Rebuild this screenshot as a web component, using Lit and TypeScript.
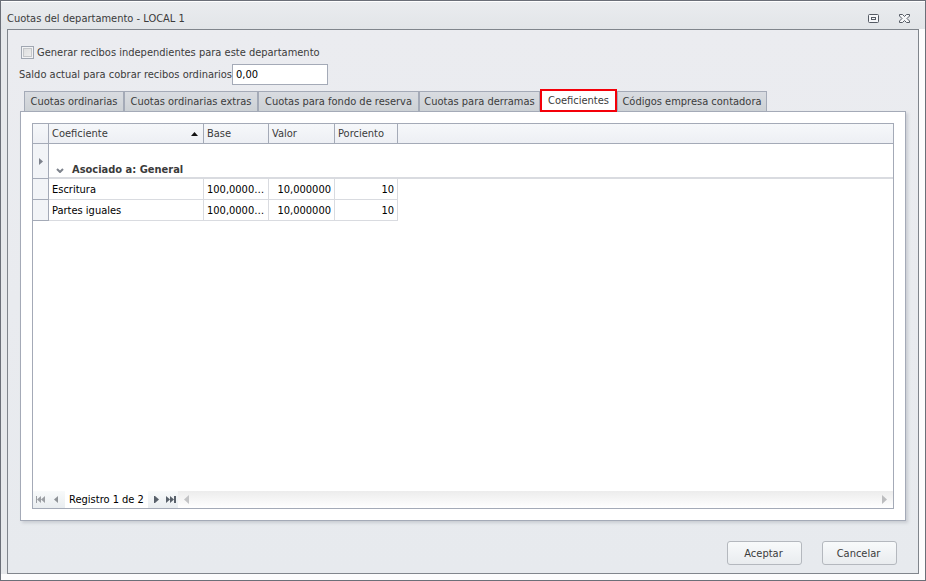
import { LitElement, html, css, svg } from "lit";
import { customElement, state } from "lit/decorators.js";
import { classMap } from "lit/directives/class-map.js";

const TABS = [
  "Cuotas ordinarias",
  "Cuotas ordinarias extras",
  "Cuotas para fondo de reserva",
  "Cuotas para derramas",
  "Coeficientes",
  "Códigos empresa contadora",
];

const ROWS = [
  { name: "Escritura", base: "100,000000", value: "10,000000", percent: "10" },
  { name: "Partes iguales", base: "100,000000", value: "10,000000", percent: "10" },
];

const icon = (w: number, h: number, body: unknown) => html`<svg
  width=${w} height=${h} viewBox="0 0 ${w} ${h}" aria-hidden="true">${body}</svg>`;

const maximizeIcon = icon(11, 9, svg`
  <rect x="0.5" y="0.5" width="10" height="8" rx="1" fill="#f6f7f9" stroke="#555b64"/>
  <rect x="3.5" y="3.5" width="4" height="2" fill="none" stroke="#555b64"/>`);
const closeIcon = icon(11, 9, svg`
  <path d="M0.5 0.5H3.5L5.5 2.5L7.5 0.5H10.5V2L8 4.5L10.5 7V8.5H7.5L5.5 6.5L3.5 8.5H0.5V7L3 4.5L0.5 2Z"
    fill="#f6f7f9" stroke="#555b64"/>`);
const sortIcon = icon(7, 4, svg`<path d="M0 4L3.5 0L7 4Z" fill="#111"/>`);
const rowIcon = icon(4, 7, svg`<path d="M0 0L4 3.5L0 7Z" fill="#7d828c"/>`);
const chevronIcon = icon(8, 5, svg`<path d="M1 1L4 4L7 1" fill="none" stroke="#7d828c" stroke-width="2"/>`);
const firstIcon = icon(10, 7, svg`<path d="M0 0H1V7H0Z M5 0V7L1 3.5Z M9 0V7L5 3.5Z" fill="#9c9fa4"/>`);
const prevIcon = icon(4, 7, svg`<path d="M4 0L0 3.5L4 7Z" fill="#8f9398"/>`);
const nextIcon = icon(5, 7, svg`<path d="M0 0H1L5 3.5L1 7H0Z" fill="#59616b"/>`);
const lastIcon = icon(10, 7, svg`<path d="M0 0L4 3.5L0 7Z M4 0L8 3.5L4 7Z M8 0H10V7H8Z" fill="#59616b"/>`);
const scrollLeftIcon = icon(5, 9, svg`<path d="M5 0L0 4.5L5 9Z" fill="#c3c4c6"/>`);
const scrollRightIcon = icon(5, 9, svg`<path d="M0 0L5 4.5L0 9Z" fill="#bcbdbf"/>`);

@customElement("app-root")
export class AppRoot extends LitElement {
  @state() private active = 4;

  static styles = css`
    :host {
      display: flex;
      flex-direction: column;
      box-sizing: border-box;
      min-height: 100vh;
      border: 1px solid #6b6f78;
      background: #fcfcfd;
      color: #3b3b3b;
      font: 11px/14px "DejaVu Sans Condensed", "Noto Sans", sans-serif;
    }
    * { box-sizing: border-box; }
    button, input { font: inherit; color: inherit; margin: 0; }
    button { padding: 0; border: 0; background: none; }
    svg { display: block; }

    .titlebar {
      display: flex;
      align-items: center;
      gap: 20px;
      height: 28px;
      padding: 5px 15px 0 6px;
      border-top: 1px solid #fff;
      background: linear-gradient(#eaecef, #e2e5e8);
    }
    .title { flex: 1; margin: 0; padding-top: 1px; font: inherit; }

    .frame {
      flex: 1;
      display: flex;
      padding: 0 6px 0 0;
      margin-bottom: 6px;
      background: linear-gradient(90deg, #e6e8eb 50%, #fcfcfd 50%);
    }
    .body {
      flex: 1;
      min-width: 0;
      display: flex;
      flex-direction: column;
      margin-left: 6px;
      padding: 15px 12px 8px;
      border: 1px solid #80858c;
      background: linear-gradient(#ebecf0, #e7eaee);
    }
    .check { display: flex; align-items: center; gap: 3px; height: 14px; padding-left: 1px; }
    .check label { padding-top: 1px; }
    .check input {
      appearance: none;
      width: 13px;
      height: 13px;
      border: 1px solid #a0a6b1;
      background: linear-gradient(135deg, #d9dadb, #f1f1f1);
      box-shadow: inset 0 0 0 1px #f2f3f5, inset 0 0 0 2px #c4c6c9;
    }
    .balance { display: flex; align-items: center; margin: 5px 0 4px -1px; }
    .balance label { width: 213px; white-space: nowrap; }
    .balance input {
      width: 96px;
      height: 21px;
      padding: 0 3px;
      border: 1px solid #a4aab7;
      background: #fff;
      color: #000;
    }

    .tabs {
      display: grid;
      grid-template-columns: 100px 134px 161px 121px 77px 150px;
      align-items: end;
      height: 23px;
      margin: 0 0 -1px 4px;
    }
    .tab {
      height: 21px;
      padding-top: 1px;
      border: 1px solid #a4aab7;
      background: linear-gradient(#d9dce1, #cdd1d5);
      white-space: nowrap;
    }
    .tab.active {
      position: relative;
      height: 23px;
      border: 2px solid #f40009;
      background: #fff;
    }

    .panel {
      flex: 1;
      display: flex;
      padding: 11px;
      border: 1px solid #a4aab7;
      background: #fff;
      box-shadow: 2px 2px 3px #c9ccd2;
    }
    .grid {
      flex: 1;
      min-width: 0;
      display: flex;
      flex-direction: column;
      border: 1px solid #a4aab7;
    }
    .scroll { flex: 1; }
    table { width: 100%; table-layout: fixed; border-collapse: separate; border-spacing: 0; }
    .c-mark { width: 16px; }
    .c-name { width: 155px; }
    .c-base { width: 65px; }
    .c-value { width: 66px; }
    .c-pct { width: 63px; }
    th, td { padding: 0 3px; overflow: hidden; white-space: nowrap; text-overflow: ellipsis; }
    thead th {
      height: 20px;
      border-right: 1px solid #a4aab7;
      border-bottom: 1px solid #a4aab7;
      background: linear-gradient(#f6f8fa, #edeff4);
      font-weight: 400;
      text-align: left;
    }
    thead th:last-child, td:last-child { border-right: 0; }
    .sorted { display: flex; align-items: center; justify-content: space-between; padding-right: 2px; }
    tbody td { height: 21px; padding-top: 1px; border-right: 1px solid #d9dbe0; border-bottom: 1px solid #d9dbe0; color: #000; }
    td.mark {
      padding: 0 0 0 6px;
      border-color: #a4aab7;
      background: #f2f4f7;
    }
    td.num { text-align: right; }
    td.rest { border: 0; }
    td.group {
      height: 35px;
      padding: 0 7px;
      vertical-align: bottom;
      border-right: 0;
      border-bottom: 2px solid #d9dbe0;
      color: #3b3b3b;
    }
    .toggle { display: flex; align-items: center; gap: 8px; font-weight: 700; }

    .footer { display: flex; height: 17px; color: #000; }
    .nav {
      display: flex;
      align-items: center;
      gap: 8px;
      width: 32px;
      padding-left: 3px;
      background: linear-gradient(#f8fafb, #e9edf0);
    }
    .nav.fwd { width: 30px; padding-left: 6px; gap: 7px; }
    .record { width: 83px; line-height: 18px; text-align: center; white-space: nowrap; }
    .bar {
      flex: 1;
      display: flex;
      align-items: center;
      justify-content: space-between;
      padding: 0 6px;
      background: linear-gradient(#ececec, #fff);
    }

    .actions { display: flex; justify-content: flex-end; gap: 20px; margin: 20px 9px 0 0; }
    .action {
      width: 75px;
      height: 24px;
      padding: 1px 2px 0 0;
      border: 1px solid #b4b8be;
      border-radius: 3px;
      background: linear-gradient(#f8fafb, #e9ecef);
    }
  `;

  render() {
    return html`
      <header class="titlebar">
        <h1 class="title">Cuotas del departamento - LOCAL 1</h1>
        <button aria-label="Maximizar">${maximizeIcon}</button>
        <button aria-label="Cerrar">${closeIcon}</button>
      </header>
      <div class="frame">
        <main class="body">
          <div class="check">
            <input type="checkbox" id="independent" />
            <label for="independent">Generar recibos independientes para este departamento</label>
          </div>
          <div class="balance">
            <label for="balance">Saldo actual para cobrar recibos ordinarios:</label>
            <input id="balance" type="text" value="0,00" />
          </div>
          <div class="tabs" role="tablist">
            ${TABS.map((label, i) => html`<button
              role="tab"
              aria-selected=${i === this.active}
              class=${classMap({ tab: true, active: i === this.active })}
              @click=${() => (this.active = i)}
            >${label}</button>`)}
          </div>
          <section class="panel" role="tabpanel">
            <div class="grid">
              <div class="scroll">
                <table>
                  <colgroup>
                    <col class="c-mark" /><col class="c-name" /><col class="c-base" />
                    <col class="c-value" /><col class="c-pct" /><col />
                  </colgroup>
                  <thead>
                    <tr>
                      <th></th>
                      <th><div class="sorted">Coeficiente ${sortIcon}</div></th>
                      <th>Base</th><th>Valor</th><th>Porciento</th><th></th>
                    </tr>
                  </thead>
                  <tbody>
                    <tr>
                      <td class="mark">${rowIcon}</td>
                      <td class="group" colspan="5">
                        <button class="toggle">${chevronIcon} Asociado a: General</button>
                      </td>
                    </tr>
                    ${ROWS.map((r) => html`<tr>
                      <td class="mark"></td>
                      <td>${r.name}</td>
                      <td class="num">${r.base}</td>
                      <td class="num">${r.value}</td>
                      <td class="num">${r.percent}</td>
                      <td class="rest"></td>
                    </tr>`)}
                  </tbody>
                </table>
              </div>
              <div class="footer">
                <div class="nav">
                  <button aria-label="Primero">${firstIcon}</button>
                  <button aria-label="Anterior">${prevIcon}</button>
                </div>
                <span class="record">Registro 1 de 2</span>
                <div class="nav fwd">
                  <button aria-label="Siguiente">${nextIcon}</button>
                  <button aria-label="Último">${lastIcon}</button>
                </div>
                <div class="bar">
                  <button aria-label="Desplazar a la izquierda">${scrollLeftIcon}</button>
                  <button aria-label="Desplazar a la derecha">${scrollRightIcon}</button>
                </div>
              </div>
            </div>
          </section>
          <div class="actions">
            <button class="action">Aceptar</button>
            <button class="action">Cancelar</button>
          </div>
        </main>
      </div>
    `;
  }
}
